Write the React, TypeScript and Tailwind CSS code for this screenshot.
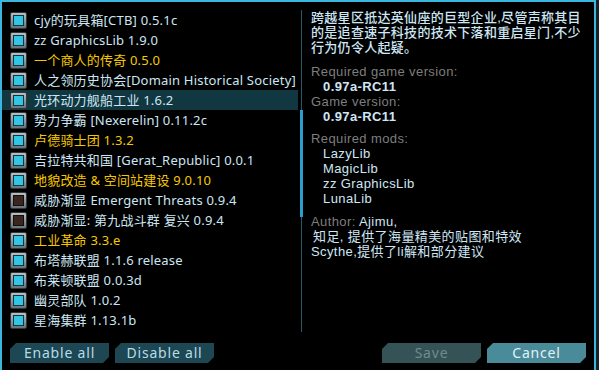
import React from 'react';

type Mod = { name: string; on: boolean; yellow?: boolean };

const mods: Mod[] = [
  { name: 'cjy的玩具箱[CTB] 0.5.1c', on: true },
  { name: 'zz GraphicsLib 1.9.0', on: true },
  { name: '一个商人的传奇 0.5.0', on: true, yellow: true },
  { name: '人之领历史协会[Domain Historical Society]', on: true },
  { name: '光环动力舰船工业 1.6.2', on: true },
  { name: '势力争霸 [Nexerelin] 0.11.2c', on: true },
  { name: '卢德骑士团 1.3.2', on: true, yellow: true },
  { name: '吉拉特共和国 [Gerat_Republic] 0.0.1', on: true },
  { name: '地貌改造 & 空间站建设 9.0.10', on: true, yellow: true },
  { name: '威胁渐显 Emergent Threats 0.9.4', on: false },
  { name: '威胁渐显: 第九战斗群 复兴 0.9.4', on: false },
  { name: '工业革命 3.3.e', on: true, yellow: true },
  { name: '布塔赫联盟 1.1.6 release', on: true },
  { name: '布莱顿联盟 0.0.3d', on: true },
  { name: '幽灵部队 1.0.2', on: true },
  { name: '星海集群 1.13.1b', on: true },
  { name: '', on: true },
];

const Checkbox = ({ on }: { on: boolean }) => (
  <div className="w-[17px] h-[17px] shrink-0 rounded-[2px] border border-[#30383b] bg-gradient-to-b from-[#b8c0c4] to-[#6a7377] p-[2px]">
    <div
      className={`w-full h-full border ${
        on ? 'border-[#0a3745] bg-[#33c6e4]' : 'border-[#160b09] bg-[#3a2521]'
      }`}
    />
  </div>
);

const cut =
  '[clip-path:polygon(6px_0,100%_0,100%_calc(100%-6px),calc(100%-6px)_100%,0_100%,0_6px)]';

const GameButton = ({ label, tone }: { label: string; tone: 'dark' | 'off' | 'light' }) => {
  const tones = {
    dark: 'bg-[#1c4753] text-[#b7dce8]',
    off: 'bg-[#355256] text-[#6f8c90]',
    light: 'bg-[#4a8b99] text-[#e2f2f6]',
  };
  return (
    <button
      className={`w-[99px] h-[20px] flex items-center justify-center text-[14px] tracking-[0.8px] leading-none ${cut} ${tones[tone]}`}
    >
      {label}
    </button>
  );
};

export default function App() {
  return (
    <div
      className="w-[599px] h-[370px] bg-[#1a2125] flex overflow-hidden"
      style={{ fontFamily: '"Noto Sans", "Noto Sans CJK SC", sans-serif' }}
    >
      <div className="w-[596px] h-full bg-black border-l-2 border-t-2 border-r-2 border-[#3bb6de] flex flex-col">
        <div className="flex h-[335px]">
          {/* Mod list */}
          <div className="w-[296px] pt-[8px] h-[330px] overflow-hidden flex flex-col">
            {mods.map((m, i) => (
              <div
                key={i}
                className={`h-[20px] shrink-0 flex items-center pl-[8px] gap-[7px] ${
                  i === 4 ? 'bg-[#113740]' : ''
                }`}
              >
                <Checkbox on={m.on} />
                <span
                  className={`text-[13px] tracking-[0.2px] whitespace-nowrap leading-none ${
                    m.yellow ? 'text-[#f7c800]' : 'text-[#cde6f3]'
                  }`}
                >
                  {m.name}
                </span>
              </div>
            ))}
          </div>

          {/* Scrollbar */}
          <div className="w-[6px] pt-[8px] flex justify-center">
            <div className="w-px h-[322px] bg-[#28596a] flex flex-col">
              <div className="h-[100px]" />
              <div className="w-[3px] -ml-px h-[107px] bg-[#2a9fcf]" />
            </div>
          </div>

          {/* Description */}
          <div
            className="flex-1 pl-[7px] pt-[8px] text-[13px] leading-[15px] tracking-[0.4px] text-[#cfe6f5] whitespace-nowrap"
            style={{ fontFamily: '"Liberation Sans", "Noto Sans CJK SC", sans-serif' }}
          >
            <div className="font-medium tracking-[0.3px]">
              跨越星区抵达英仙座的巨型企业,尽管声称其目
              <br />
              的是追查速子科技的技术下落和重启星门,不少
              <br />
              行为仍令人起疑。
            </div>
            <div className="mt-[9px] text-[#7e7e7e]">Required game version:</div>
            <div className="pl-[12px] font-bold">0.97a-RC11</div>
            <div className="text-[#7e7e7e]">Game version:</div>
            <div className="pl-[12px] font-bold">0.97a-RC11</div>
            <div className="mt-[7px] text-[#7e7e7e]">Required mods:</div>
            <div className="pl-[12px]">LazyLib</div>
            <div className="pl-[12px]">MagicLib</div>
            <div className="pl-[12px]">zz GraphicsLib</div>
            <div className="pl-[12px]">LunaLib</div>
            <div className="mt-[8px]">
              <span className="text-[#7e7e7e]">Author: </span>Ajimu,
            </div>
            <div className="pl-[2px]">知足, 提供了海量精美的贴图和特效</div>
            <div>Scythe,提供了li解和部分建议</div>
          </div>
        </div>

        {/* Buttons */}
        <div className="flex items-start pt-[6px] pl-[8px] pr-[8px]">
          <div className="flex gap-[6px]">
            <GameButton label="Enable all" tone="dark" />
            <GameButton label="Disable all" tone="dark" />
          </div>
          <div className="ml-auto flex gap-[6px]">
            <GameButton label="Save" tone="off" />
            <GameButton label="Cancel" tone="light" />
          </div>
        </div>
      </div>
    </div>
  );
}
